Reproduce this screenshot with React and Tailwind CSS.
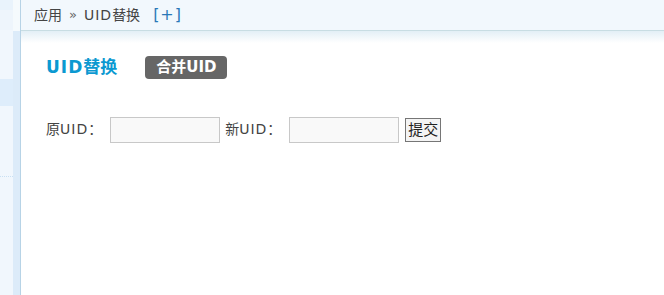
export default function App() {
  const font = { fontFamily: '"DejaVu Sans", "Noto Sans CJK SC", sans-serif' };

  return (
    <div className="flex h-[295px] w-[664px] overflow-hidden bg-white text-[14px] text-[#444]" style={font}>
      {/* Left sidebar */}
      <div className="flex h-full w-[21px] shrink-0">
        <div className="flex w-[13px] flex-col bg-[#f1f7fd]">
          <div className="h-[10px] bg-[#e9f3fc]"></div>
          <div className="h-[20px] bg-[#eef5fc]"></div>
          <div className="h-[49px]"></div>
          <div className="h-[27px] bg-[#deedfb]"></div>
          <div className="h-[70px]"></div>
          <div className="border-t border-dotted border-[#c9e0f3]"></div>
        </div>
        <div className="flex w-[7px] flex-col">
          <div className="h-[31px] bg-[#f5fafd]"></div>
          <div className="flex-1 bg-[#dcebf9]"></div>
        </div>
        <div className="w-px bg-[#b7d3e6]"></div>
      </div>

      {/* Main area */}
      <div className="flex flex-1 flex-col">
        <div className="flex h-[31px] items-center border-b border-[#c8dde3] bg-[#f2f8fd] pl-[13px]">
          <span>应用</span>
          <span className="mx-[7px] text-[13px] text-[#666]">»</span>
          <span><span className="tracking-[1px]">UID</span>替换</span>
          <span className="ml-[13px] text-[16px] tracking-[1px] text-[#2a78b8]">[+]</span>
        </div>
        <div className="h-[12px] bg-gradient-to-b from-[#e3eff6] to-white"></div>

        <div className="pl-[25px]">
          <div className="mt-[12px] flex items-center">
            <h1 className="text-[17px] font-bold text-[#0b99d1]">
              <span className="tracking-[1px]">UID</span>替换
            </h1>
            <span className="ml-[28px] rounded-[4px] bg-[#666] px-[11px] py-[2px] text-[15px] font-bold leading-[19px] text-white">
              合并UID
            </span>
          </div>

          <div className="mt-[36px] flex items-center">
            <span>原<span className="tracking-[1px]">UID</span>：</span>
            <input className="ml-[8px] h-[26px] w-[110px] border border-[#c8c8c8] bg-[#f9f9f9] outline-none" />
            <span className="ml-[5px]">新<span className="tracking-[1px]">UID</span>：</span>
            <input className="ml-[8px] h-[26px] w-[110px] border border-[#c8c8c8] bg-[#f9f9f9] outline-none" />
            <button className="ml-[6px] h-[24px] border border-[#767676] bg-[#f4f4f4] px-[2px] text-[15px] leading-[20px] text-[#222]">
              提交
            </button>
          </div>
        </div>
      </div>
    </div>
  );
}
